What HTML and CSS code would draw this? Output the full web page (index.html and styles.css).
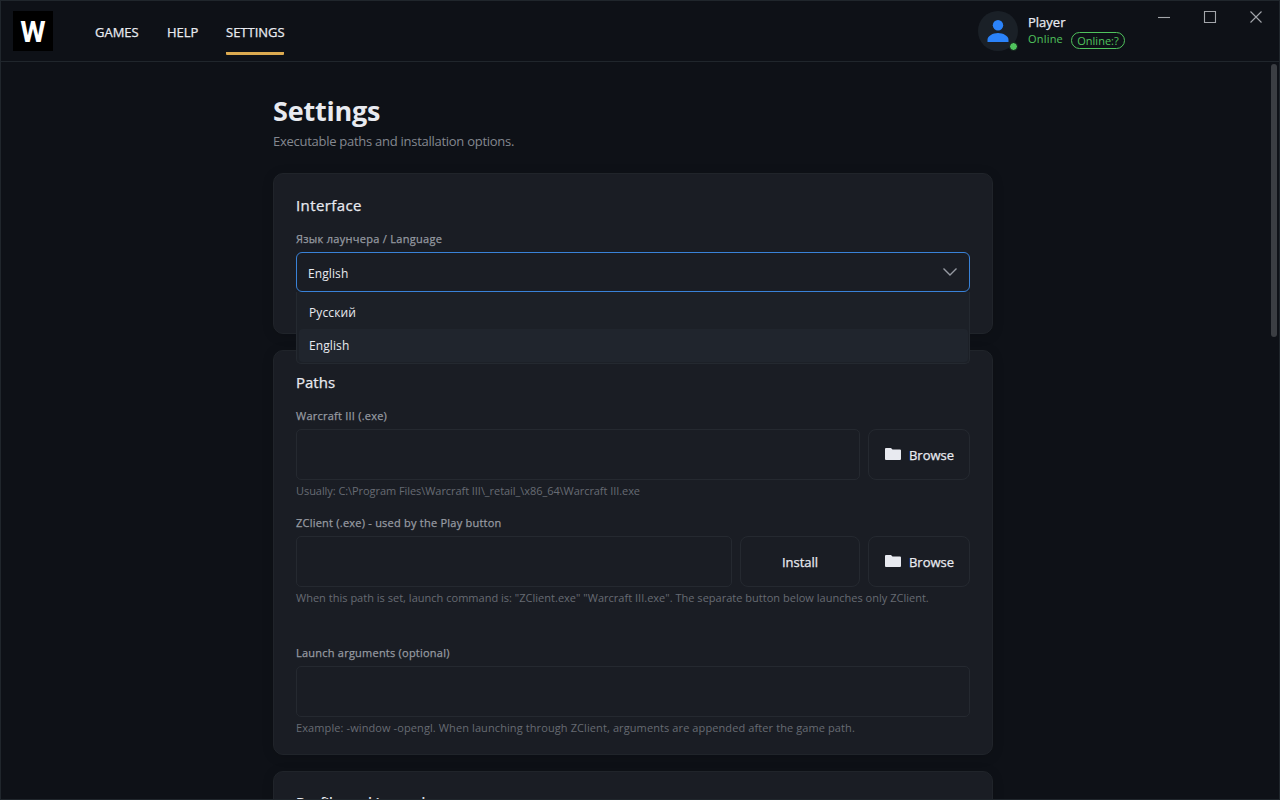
FILE: index.html
```
<!DOCTYPE html>
<html lang="en">
<head>
  <meta charset="UTF-8">
  <title>Launcher - Settings</title>
  <link rel="stylesheet" href="styles.css">
</head>
<body>
  <div class="window">
    <header class="topbar">
      <div class="logo">W</div>
      <nav class="nav">
        <a class="nav-games">GAMES</a>
        <a class="nav-help">HELP</a>
        <a class="nav-settings active">SETTINGS</a>
      </nav>
      <div class="user">
        <div class="avatar">
          <svg width="22" height="22" viewBox="0 0 22 22" fill="#2b83fa">
            <circle cx="11" cy="5.2" r="5.2"/>
            <path d="M.5 22v-2.200C.5 15.800 6 13 11 13s10.500 2.800 10.500 6.800V22z"/>
          </svg>
          <span class="dot"></span>
        </div>
        <div class="user-info">
          <div class="user-name">Player</div>
          <div class="user-status">
            <span class="status-text">Online</span>
            <span class="badge">Online:?</span>
          </div>
        </div>
      </div>
      <div class="window-buttons">
        <svg width="14" height="14" viewBox="0 0 14 14"><path d="M1 8.500h12"/></svg>
        <svg width="14" height="14" viewBox="0 0 14 14"><path d="M1.500 2.500h11v11h-11z"/></svg>
        <svg width="14" height="14" viewBox="0 0 14 14"><path d="M1.500 2.500l11 11M12.500 2.500l-11 11"/></svg>
      </div>
    </header>

    <main class="content">
      <div class="page">
        <h1>Settings</h1>
        <p class="subtitle">Executable paths and installation options.</p>

        <section class="card card-interface">
          <h2 class="title-interface">Interface</h2>
          <div class="label label-lang">Язык лаунчера / Language</div>
          <div class="select">
            <div class="select-box">
              <span>English</span>
              <svg width="16" height="10" viewBox="0 0 16 10"><path d="M1.500 1.500L8 8l6.500-6.500"/></svg>
            </div>
            <div class="options">
              <div class="option">Русский</div>
              <div class="option selected">English</div>
            </div>
          </div>
        </section>

        <section class="card card-paths">
          <h2>Paths</h2>
          <div class="label">Warcraft III (.exe)</div>
          <div class="row">
            <div class="input"></div>
            <div class="button browse">
              <svg width="16" height="12" viewBox="0 0 16 12"><path d="M1 0h5l1.500 1.500H15a1 1 0 0 1 1 1V11a1 1 0 0 1-1 1H1a1 1 0 0 1-1-1V1a1 1 0 0 1 1-1z"/></svg>
              <span>Browse</span>
            </div>
          </div>
          <div class="hint hint-war">Usually: C:\Program Files\Warcraft III\_retail_\x86_64\Warcraft III.exe</div>

          <div class="label label-client">ZClient (.exe) - used by the Play button</div>
          <div class="row">
            <div class="input"></div>
            <div class="button install"><span>Install</span></div>
            <div class="button browse">
              <svg width="16" height="12" viewBox="0 0 16 12"><path d="M1 0h5l1.500 1.500H15a1 1 0 0 1 1 1V11a1 1 0 0 1-1 1H1a1 1 0 0 1-1-1V1a1 1 0 0 1 1-1z"/></svg>
              <span>Browse</span>
            </div>
          </div>
          <div class="hint hint-client">When this path is set, launch command is: "ZClient.exe" "Warcraft III.exe". The separate button below launches only ZClient.</div>

          <div class="label label-args">Launch arguments (optional)</div>
          <div class="row">
            <div class="input"></div>
          </div>
          <div class="hint hint-args">Example: -window -opengl. When launching through ZClient, arguments are appended after the game path.</div>
        </section>

        <section class="card card-profile">
          <h2>Profile and journal</h2>
        </section>
      </div>
      <div class="scrollbar"></div>
    </main>
  </div>
</body>
</html>
```
FILE: styles.css
```
* {
  box-sizing: border-box;
}
body {
  margin: 0;
  font-family: "Open Sans", "Noto Sans", sans-serif;
  background-color: #0e1117;
  color: #e8eaf0;
}
svg {
  display: block;
}
.window {
  width: 1280px;
  height: 800px;
  border: 1px solid #20262c;
  overflow: hidden;
}
.topbar {
  display: flex;
  height: 61px;
  padding-left: 12px;
  border-bottom: 1px solid #20262c;
}
.logo {
  width: 40px;
  height: 40px;
  margin-top: 10px;
  background-color: #000;
  color: #fff;
  font-family: Roboto, sans-serif;
  font-size: 29px;
  font-weight: 700;
  line-height: 42px;
  text-align: center;
}
.nav {
  display: flex;
  gap: 28px;
  margin-left: 42px;
  padding-top: 20px;
}
.nav a {
  height: 34px;
  font-size: 13px;
  line-height: 23px;
  white-space: nowrap;
}
.nav a.active {
  border-bottom: 3px solid #dcaa50;
  border-radius: 1px;
}
/* slightly heavier than regular */
.nav a,
.user-name,
.label,
.button,
h2 {
  font-weight: 500;
  -webkit-text-stroke: 0.25px;
}
.nav-games {
  width: 44px;
}
.nav-help {
  width: 31px;
}
.nav-settings {
  width: 58px;
}
.user {
  display: flex;
  gap: 10px;
  margin-left: auto;
  padding-top: 10px;
}
.avatar {
  position: relative;
  width: 40px;
  height: 40px;
  padding: 9px;
  border-radius: 50%;
  background-color: #1a2027;
}
.dot {
  position: absolute;
  right: 0;
  bottom: 0;
  width: 9px;
  height: 9px;
  border: 1px solid #0e1117;
  border-radius: 50%;
  background-color: #50c35d;
}
.user-name {
  font-size: 13px;
  line-height: 22px;
}
.user-status {
  display: flex;
  gap: 8px;
  color: #50c35d;
  font-size: 11px;
  line-height: 12px;
}
.status-text {
  width: 35px;
  letter-spacing: 0.2px;
}
.badge {
  width: 54px;
  height: 17px;
  margin-top: -1px;
  border: 1px solid #50c35d;
  border-radius: 9px;
  line-height: 16px;
  text-align: center;
}
.window-buttons {
  display: flex;
  gap: 32px;
  margin-left: 32px;
  padding: 8px 16px 0 0;
}
.window-buttons path {
  fill: none;
  stroke: #a3a6ab;
  stroke-width: 1.1;
}
.content {
  display: flex;
  justify-content: space-between;
  height: 738px;
  padding-left: 272px;
  overflow: hidden;
}
.page {
  width: 720px;
  padding-top: 29px;
}
.scrollbar {
  width: 6px;
  height: 273px;
  margin: 2px 2px 0 0;
  border-radius: 3px;
  background-color: #3b3e43;
}
h1 {
  margin: 0;
  font-size: 27px;
  font-weight: 700;
  letter-spacing: -0.2px;
  line-height: 40px;
}
.subtitle {
  margin: 0 0 21px;
  color: #848890;
  font-size: 13px;
  letter-spacing: -0.27px;
  line-height: 21px;
}
.card {
  margin-bottom: 16px;
  padding: 20px 22px;
  border: 1px solid #20242a;
  border-radius: 10px;
  background-color: #1a1d24;
  box-shadow: 0 2px 12px rgba(0, 0, 0, 0.15);
}
.card-interface {
  height: 161px;
}
.card-paths {
  height: 405px;
}
.card-profile {
  padding-top: 19px;
}
h2 {
  margin: 0;
  font-size: 15px;
  line-height: 22px;
}
.title-interface {
  letter-spacing: 0.4px;
}
.label {
  height: 20px;
  margin-top: 13px;
  color: #969aa1;
  font-size: 11px;
  letter-spacing: 0.23px;
  line-height: 20px;
  white-space: nowrap;
}
.label-lang {
  letter-spacing: 0.29px;
}
.select {
  position: relative;
  margin-top: 3px;
  font-size: 12px;
  letter-spacing: 0.1px;
}
.select-box {
  display: flex;
  align-items: center;
  justify-content: space-between;
  height: 40px;
  padding: 0 11px;
  border: 1px solid #3982d8;
  border-radius: 6px;
}
.select-box span {
  padding-top: 2px;
}
.select-box path {
  fill: none;
  stroke: #969aa2;
  stroke-width: 1.4;
}
/* open list covers the gap between the cards */
.options {
  position: absolute;
  top: 40px;
  left: 0;
  right: 0;
  z-index: 1;
  height: 72px;
  padding: 4px 1px 2px 2px;
  border: 1px solid #242930;
  border-top: 0;
  border-radius: 0 0 5px 5px;
  background-color: #1c2027;
}
.option {
  height: 33px;
  padding-left: 10px;
  border-radius: 4px;
  line-height: 33px;
}
.option.selected {
  background-color: #20252d;
}
.row {
  display: flex;
  gap: 8px;
  height: 51px;
  margin-top: 3px;
}
.input {
  flex: 1;
  border: 1px solid #252930;
  border-radius: 5px;
}
.button {
  display: flex;
  align-items: center;
  justify-content: center;
  gap: 8px;
  border: 1px solid #252930;
  border-radius: 8px;
  font-size: 13px;
}
.button path {
  fill: #e8eaf0;
}
.button svg {
  margin: -2px 0 0 1px;
}
.browse {
  width: 102px;
}
.install {
  width: 120px;
}
.hint {
  height: 22px;
  color: #676b73;
  font-size: 11px;
  line-height: 22px;
  white-space: nowrap;
}
.hint-war {
  letter-spacing: -0.06px;
}
.hint-client {
  letter-spacing: 0.015px;
}
.hint-args {
  letter-spacing: 0.1px;
}
.label-client {
  margin-top: 11px;
}
.label-args {
  margin-top: 34px;
}
```
